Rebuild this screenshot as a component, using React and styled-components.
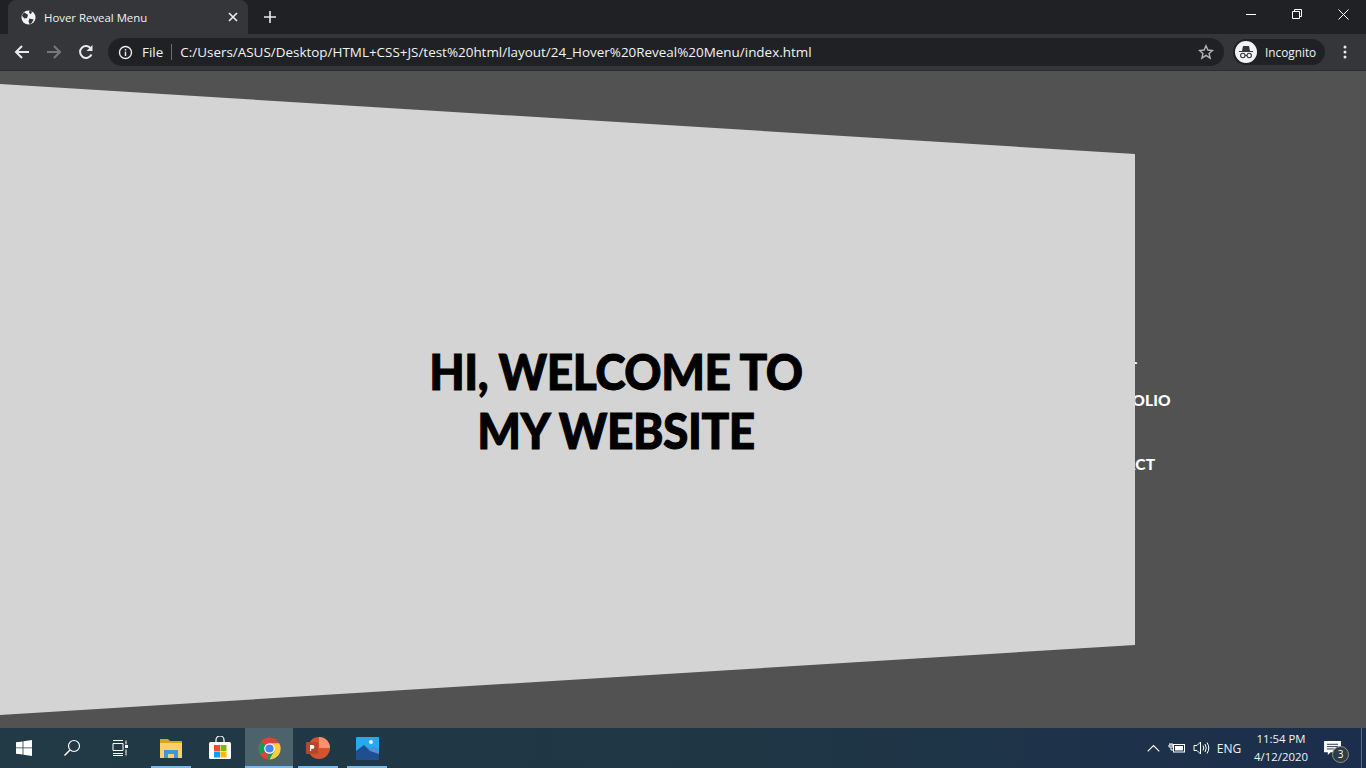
import React from 'react';
import styled, { createGlobalStyle } from 'styled-components';

const GlobalStyle = createGlobalStyle`
  html, body { margin: 0; padding: 0; height: 100%; overflow: hidden; }
  body { font-family: "Open Sans", "Liberation Sans", sans-serif; background: #525252; }
`;

const Page = styled.div`
  width: 1366px;
  height: 768px;
  display: flex;
  flex-direction: column;
`;

const TabStrip = styled.div`
  height: 34px;
  background: #202124;
  display: flex;
  align-items: flex-end;
  padding-left: 8px;
`;

const Tab = styled.div`
  width: 240px;
  height: 34px;
  box-sizing: border-box;
  background: #35363a;
  border-radius: 8px 8px 0 0;
  display: flex;
  align-items: center;
  padding: 0 10px 0 13px;
  color: #f1f3f4;
  font-size: 11.4px;
`;

const TabTitle = styled.span`
  margin-left: 8px;
  flex: 1;
  font-family: "Open Sans", sans-serif;
`;

const NewTab = styled.div`
  width: 28px;
  height: 34px;
  margin-left: 8px;
  display: flex;
  align-items: center;
  justify-content: center;
`;

const WindowControls = styled.div`
  margin-left: auto;
  height: 28px;
  align-self: flex-start;
  display: flex;
`;

const WindowButton = styled.div`
  width: 46px;
  height: 28px;
  display: flex;
  align-items: center;
  justify-content: center;
`;

const Toolbar = styled.div`
  height: 37px;
  box-sizing: border-box;
  background: #35363a;
  border-bottom: 1px solid #2a2b2e;
  display: flex;
  align-items: center;
  padding-left: 6px;
`;

const NavIcon = styled.div`
  width: 32px;
  height: 32px;
  display: flex;
  align-items: center;
  justify-content: center;
`;

const AddressBar = styled.div`
  width: 1116px;
  height: 28px;
  margin-left: 6px;
  box-sizing: border-box;
  background: #202124;
  border-radius: 14px;
  display: flex;
  align-items: center;
  padding: 0 10px;
  font-size: 13.45px;
  color: #f1f3f4;
`;

const FileLabel = styled.span`
  margin-left: 9px;
  padding-right: 8px;
  border-right: 1px solid #6b6c70;
  line-height: 16px;
`;

const Url = styled.span`
  margin-left: 8px;
  flex: 1;
  white-space: nowrap;
`;

const ProfileChip = styled.div`
  width: 92px;
  height: 26px;
  margin-left: 9px;
  box-sizing: border-box;
  border-radius: 13px;
  background: #202124;
  display: flex;
  align-items: center;
  padding-left: 2px;
  gap: 8px;
  color: #f1f3f4;
  font-size: 11.8px;
`;

const Avatar = styled.div`
  width: 22px;
  height: 22px;
  border-radius: 50%;
  background: #f1f3f4;
  display: flex;
  align-items: center;
  justify-content: center;
`;

const MenuDots = styled.div`
  width: 28px;
  height: 32px;
  margin-left: 6px;
  display: flex;
  align-items: center;
  justify-content: center;
`;

const Stage = styled.main`
  position: relative;
  flex: 1;
  background: #525252;
  overflow: hidden;
  display: flex;
  justify-content: flex-end;
  align-items: center;
`;

const SideNav = styled.nav`
  width: 285px;
  box-sizing: border-box;
  display: flex;
  flex-direction: column;
  margin-top: 45px;
`;

const NavLink = styled.a`
  height: ${p => p.$h}px;
  display: flex;
  align-items: center;
  color: #fff;
  font-family: "Lato", sans-serif;
  font-weight: 900;
  font-size: 15.5px;
  letter-spacing: 0.2px;
`;

/* the page pushed back in perspective when the menu is revealed */
const Panel = styled.section`
  position: absolute;
  left: 0;
  top: 0;
  width: 1135px;
  height: 657px;
  background: #d4d4d4;
  clip-path: polygon(0 13px, 100% 83px, 100% 574px, 0 644px);
  display: flex;
  align-items: center;
  justify-content: center;
`;

const Heading = styled.h1`
  margin: 2px 0 0 96px;
  text-align: center;
  color: #000;
  font-family: "Lato", sans-serif;
  font-weight: 900;
  font-size: 50px;
  line-height: 59px;
  letter-spacing: -0.5px;
  -webkit-text-stroke: 1px #000;
  transform: scaleX(0.92);
`;

const Taskbar = styled.footer`
  height: 40px;
  background: linear-gradient(90deg, #213a45 0%, #1f3646 60%, #1b2e4c 100%);
  display: flex;
  align-items: stretch;
  color: #fff;
`;

const TaskIcon = styled.div`
  width: ${p => p.$w || 48}px;
  margin-right: ${p => p.$gap || 0}px;
  box-sizing: border-box;
  display: flex;
  align-items: center;
  justify-content: center;
  position: relative;
  background: ${p => (p.$active ? '#4c636c' : 'transparent')};
  &::after {
    content: '';
    display: ${p => (p.$running ? 'block' : 'none')};
    position: absolute;
    bottom: 0;
    left: ${p => (p.$active ? 0 : 4)}px;
    right: ${p => (p.$active ? 0 : 4)}px;
    height: 2px;
    background: #76b9ed;
  }
`;

const Tray = styled.div`
  margin-left: auto;
  display: flex;
  align-items: center;
  font-size: 12px;
  font-family: "Open Sans", sans-serif;
  color: #f0f3f6;
`;

const TrayItem = styled.div`
  width: ${p => p.$w}px;
  display: flex;
  align-items: center;
  justify-content: center;
`;

const Clock = styled.div`
  width: 72px;
  text-align: center;
  font-size: 11.4px;
  line-height: 18px;
`;

const Notifications = styled.div`
  position: relative;
  width: 31px;
  height: 40px;
  display: flex;
  align-items: center;
  justify-content: center;
`;

const CountBadge = styled.span`
  position: absolute;
  left: 15px;
  top: 18px;
  width: 17px;
  height: 17px;
  box-sizing: border-box;
  border-radius: 50%;
  background: #333a40;
  border: 1px solid #8a9096;
  font-size: 10px;
  line-height: 15px;
  text-align: center;
  color: #fff;
`;

const ShowDesktop = styled.div`
  align-self: stretch;
  width: 1px;
  margin: 0 4px 0 13px;
  background: #5a6e85;
`;

const App = () => (
  <Page>
    <GlobalStyle />
    <TabStrip>
      <Tab>
        <svg width="15" height="15" viewBox="0 0 16 16"><circle cx="8" cy="8" r="7.5" fill="#f1f3f4" /><path d="M3 2.5 7.5 5 6.5 8.5 3.5 9 1 6ZM9 9l4.5 1-2.5 4.5-2 .5-1-3ZM9 .8l3 .8-1.500 3L8.500 3Z" fill="#35363a" /></svg>
        <TabTitle>Hover Reveal Menu</TabTitle>
        <svg width="10" height="10" viewBox="0 0 10 10"><path d="M1 1l8 8M9 1l-8 8" stroke="#e8eaed" strokeWidth="1.700" /></svg>
      </Tab>
      <NewTab>
        <svg width="12" height="12" viewBox="0 0 12 12"><path d="M6 0v12M0 6h12" stroke="#e8eaed" strokeWidth="1.600" /></svg>
      </NewTab>
      <WindowControls>
        <WindowButton><svg width="10" height="10" viewBox="0 0 10 10"><path d="M0 5.500h10" stroke="#fff" /></svg></WindowButton>
        <WindowButton><svg width="10" height="10" viewBox="0 0 10 10"><path d="M.5 2.500h7v7h-7zM2.500 2.500v-2h7v7h-2" fill="none" stroke="#fff" /></svg></WindowButton>
        <WindowButton><svg width="11" height="11" viewBox="0 0 11 11"><path d="M.5.5l10 10M10.500.5l-10 10" stroke="#fff" /></svg></WindowButton>
      </WindowControls>
    </TabStrip>
    <Toolbar>
      <NavIcon><svg width="16" height="16" viewBox="0 0 16 16"><path d="M15 8H2M8 2 2 8l6 6" fill="none" stroke="#e8eaed" strokeWidth="2" /></svg></NavIcon>
      <NavIcon><svg width="16" height="16" viewBox="0 0 16 16"><path d="M1 8h13M8 2l6 6-6 6" fill="none" stroke="#77787b" strokeWidth="2" /></svg></NavIcon>
      <NavIcon><svg width="16" height="16" viewBox="0 0 16 16"><path d="M13.500 10.500A6 6 0 1 1 13 4.500" fill="none" stroke="#e8eaed" strokeWidth="2" /><path d="M14.500 1v6h-6z" fill="#e8eaed" /></svg></NavIcon>
      <AddressBar>
        <svg width="15" height="15" viewBox="0 0 15 15"><circle cx="7.500" cy="7.500" r="6" fill="none" stroke="#e8eaed" strokeWidth="1.400" /><path d="M7.500 6.500v4.500M7.500 4v1.500" stroke="#e8eaed" strokeWidth="1.400" /></svg>
        <FileLabel>File</FileLabel>
        <Url>C:/Users/ASUS/Desktop/HTML+CSS+JS/test%20html/layout/24_Hover%20Reveal%20Menu/index.html</Url>
        <svg width="16" height="16" viewBox="0 0 16 16"><path d="M8 1.800l1.900 4.200 4.600.5-3.400 3.100 1 4.500L8 11.300l-4.100 2.800 1-4.500L1.500 6.500 6.100 6z" fill="none" stroke="#b4b5b7" strokeWidth="1.400" /></svg>
      </AddressBar>
      <ProfileChip>
        <Avatar>
          <svg width="16" height="14" viewBox="0 0 16 14"><path d="M1 6h14v1H1zM4 6l1-5h6l1 5z" fill="#35363a" /><circle cx="4.800" cy="10.500" r="2.200" fill="none" stroke="#35363a" strokeWidth="1.100" /><circle cx="11.200" cy="10.500" r="2.200" fill="none" stroke="#35363a" strokeWidth="1.100" /><path d="M7 10.500h2" stroke="#35363a" /></svg>
        </Avatar>
        Incognito
      </ProfileChip>
      <MenuDots>
        <svg width="4" height="14" viewBox="0 0 4 14"><circle cx="2" cy="2" r="1.500" fill="#e8eaed" /><circle cx="2" cy="7" r="1.500" fill="#e8eaed" /><circle cx="2" cy="12" r="1.500" fill="#e8eaed" /></svg>
      </MenuDots>
    </Toolbar>
    <Stage>
      <SideNav>
        <NavLink $h={20}>SOCIAL</NavLink>
        <NavLink $h={64}>PORTFOLIO</NavLink>
        <NavLink $h={64}>CONTACT</NavLink>
      </SideNav>
      <Panel>
        <Heading>HI, WELCOME TO<br />MY WEBSITE</Heading>
      </Panel>
    </Stage>
    <Taskbar>
      <TaskIcon>
        <svg width="16" height="16" viewBox="0 0 16 16"><path d="M0 2.300 6.600 1.400V7.500H0zM7.400 1.300 16 0v7.500H7.400zM0 8.300h6.600v6.300L0 13.700zM7.400 8.300H16V16l-8.600-1.300z" fill="#fff" /></svg>
      </TaskIcon>
      <TaskIcon>
        <svg width="18" height="18" viewBox="0 0 18 18"><circle cx="11" cy="7" r="5.500" fill="none" stroke="#fff" strokeWidth="1.200" /><path d="M7 11 1.500 16.500" stroke="#fff" strokeWidth="1.400" /></svg>
      </TaskIcon>
      <TaskIcon $gap={3}>
        <svg width="17" height="16" viewBox="0 0 17 16"><path d="M1 3.500h10v7H1zM1 .5h10M1 13.500h10M1 15.500h10M14 .5v4M14 9.500v6" fill="none" stroke="#fff" /><rect x="13" y="5" width="3" height="3" fill="#fff" /></svg>
      </TaskIcon>
      <TaskIcon $running>
        <svg width="22" height="19" viewBox="0 0 22 19"><path d="M0 0h8l2 2h12v3H0z" fill="#d9a520" /><path d="M0 4h22v15H0z" fill="#f9d06a" /><path d="M4 11h14v8h-4v-4H8v4H4z" fill="#3f97d9" /></svg>
      </TaskIcon>
      <TaskIcon $w={50}>
        <svg width="24" height="24" viewBox="0 0 24 24"><path d="M8 6V4a4 4 0 0 1 8 0v2" fill="none" stroke="#fff" strokeWidth="1.200" /><rect x="1" y="6" width="22" height="17" rx="1.500" fill="#fff" /><rect x="6" y="9" width="6" height="6" fill="#f25022" /><rect x="12.500" y="9" width="6" height="6" fill="#7fba00" /><rect x="6" y="15.500" width="6" height="6" fill="#00a4ef" /><rect x="12.500" y="15.500" width="6" height="6" fill="#ffb900" /></svg>
      </TaskIcon>
      <TaskIcon $active $running $gap={1}>
        <svg width="23" height="23" viewBox="0 0 24 24"><circle cx="12" cy="12" r="11.500" fill="#db4437" /><path d="M12 12 2 17.700A11.500 11.500 0 0 1 3 5z" fill="#0f9d58" /><path d="M12 12 22 17.500A11.500 11.500 0 0 1 10 23.400z" fill="#0f9d58" /><path d="M12 6.500h10.200A11.500 11.500 0 0 1 12 23.500l5-9z" fill="#ffcd40" /><circle cx="12" cy="12" r="5.500" fill="#fff" /><circle cx="12" cy="12" r="4.300" fill="#4285f4" /></svg>
      </TaskIcon>
      <TaskIcon $running $gap={1}>
        <svg width="24" height="22" viewBox="0 0 24 22"><circle cx="13" cy="11" r="11" fill="#d35230" /><path d="M13 0a11 11 0 0 1 11 11H13z" fill="#ff8f6b" /><rect x="0" y="5" width="12" height="12" rx="1" fill="#b7472a" /><path d="M4 14V8h2.500a1.800 1.800 0 0 1 0 3.800H5.200V14z" fill="#fff" /></svg>
      </TaskIcon>
      <TaskIcon $running>
        <svg width="23" height="23" viewBox="0 0 23 23"><rect width="23" height="23" rx="1" fill="#29a8ea" /><path d="M0 23V14l8-6 6 5 4-3 5 4v9z" fill="#1d4f91" /><path d="M8 8l6 5 4-3 5 4v3L14 14z" fill="#5a8fd8" /><circle cx="15" cy="5" r="2" fill="#e8f4fc" /></svg>
      </TaskIcon>
      <Tray>
        <TrayItem $w={24}><svg width="13" height="8" viewBox="0 0 13 8"><path d="M.7 7.300 6.500 1.500l5.800 5.800" fill="none" stroke="#fff" strokeWidth="1.100" /></svg></TrayItem>
        <TrayItem $w={24}><svg width="18" height="12" viewBox="0 0 18 12"><path d="M2 1v2M4 1v2M1 3h4v2H1zM3 5v3h2" fill="none" stroke="#fff" /><rect x="5.500" y="2.500" width="11" height="7.500" fill="none" stroke="#fff" /><rect x="7" y="4" width="8" height="4.500" fill="#fff" /></svg></TrayItem>
        <TrayItem $w={24}><svg width="17" height="14" viewBox="0 0 17 14"><path d="M1 4.500h3L7.500 1v12L4 9.500H1z" fill="none" stroke="#fff" /><path d="M10 4.500q1.500 2.500 0 5M12 3q2.500 4 0 8M14 1.500q3.500 5.500 0 11" fill="none" stroke="#fff" /></svg></TrayItem>
        <TrayItem $w={32}>ENG</TrayItem>
        <Clock>11:54 PM<br />4/12/2020</Clock>
        <Notifications>
          <svg width="17" height="15" viewBox="0 0 18 16"><path d="M0 0h18v12H7l-3 3v-3H0z" fill="#fff" /><path d="M3 3.500h12M3 6h12M3 8.500h8" stroke="#1d3047" /></svg>
          <CountBadge>3</CountBadge>
        </Notifications>
        <ShowDesktop />
      </Tray>
    </Taskbar>
  </Page>
);

export default App;
